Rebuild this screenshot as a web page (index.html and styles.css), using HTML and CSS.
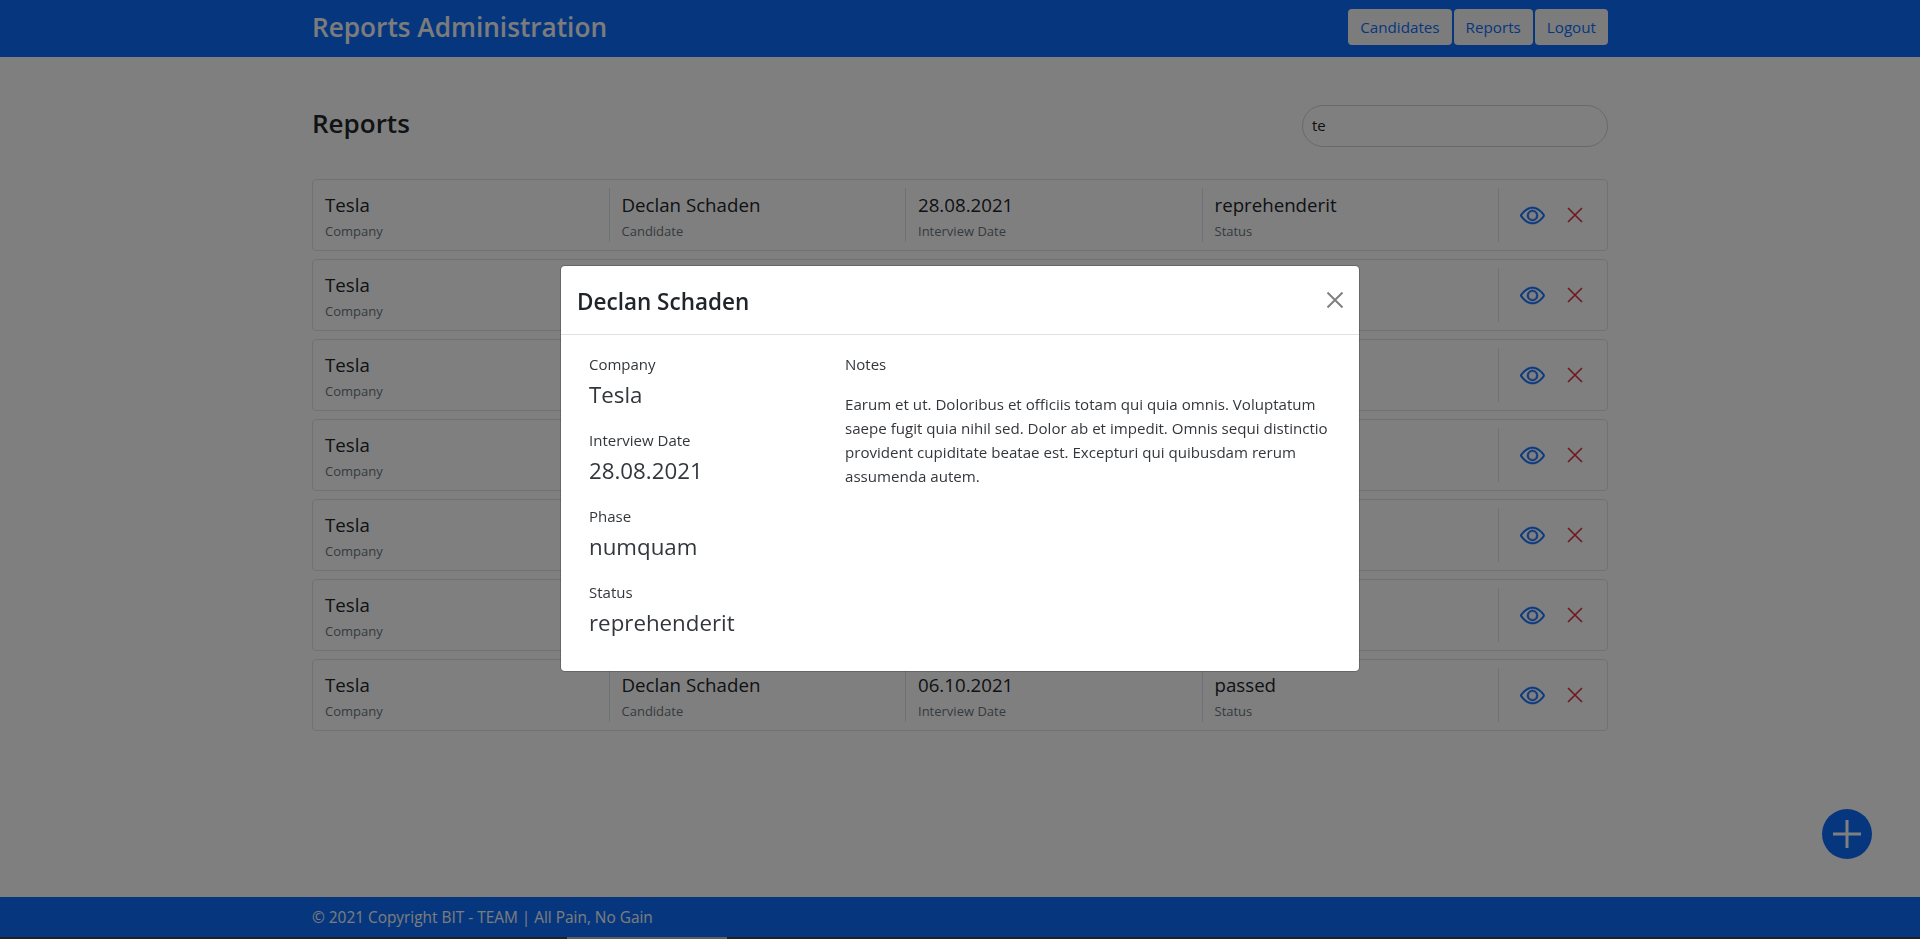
FILE: index.html
```html
<!DOCTYPE html>
<html lang="en">

<head>
    <meta charset="UTF-8">
    <meta name="viewport" content="width=device-width, initial-scale=1.0">
    <title>Reports Administration</title>
    <link rel="stylesheet" href="styles.css">
</head>

<body>
    <nav class="navbar">
        <div class="container navbar-inner">
            <span class="brand">Reports Administration</span>
            <div class="nav-buttons">
                <a class="nav-btn" href="#">Candidates</a>
                <a class="nav-btn" href="#">Reports</a>
                <a class="nav-btn" href="#">Logout</a>
            </div>
        </div>
    </nav>

    <main class="container content">
        <div class="page-head">
            <h2>Reports</h2>
            <input class="search" type="text" value="te">
        </div>

        <div class="report">
            <div class="cell"><div class="value">Tesla</div><div class="label">Company</div></div>
            <div class="cell"><div class="value">Declan Schaden</div><div class="label">Candidate</div></div>
            <div class="cell"><div class="value">28.08.2021</div><div class="label">Interview Date</div></div>
            <div class="cell"><div class="value">reprehenderit</div><div class="label">Status</div></div>
            <div class="actions">
                <svg class="eye" viewBox="0 0 16 16"><use href="#icon-eye"></use></svg>
                <svg class="cross" viewBox="0 0 16 16"><use href="#icon-x"></use></svg>
            </div>
        </div>
        <!-- the modal covers the middle of these rows -->
        <div class="report">
            <div class="cell"><div class="value">Tesla</div><div class="label">Company</div></div>
            <div class="cell"></div>
            <div class="cell"></div>
            <div class="cell"></div>
            <div class="actions">
                <svg class="eye" viewBox="0 0 16 16"><use href="#icon-eye"></use></svg>
                <svg class="cross" viewBox="0 0 16 16"><use href="#icon-x"></use></svg>
            </div>
        </div>
        <div class="report">
            <div class="cell"><div class="value">Tesla</div><div class="label">Company</div></div>
            <div class="cell"></div>
            <div class="cell"></div>
            <div class="cell"></div>
            <div class="actions">
                <svg class="eye" viewBox="0 0 16 16"><use href="#icon-eye"></use></svg>
                <svg class="cross" viewBox="0 0 16 16"><use href="#icon-x"></use></svg>
            </div>
        </div>
        <div class="report">
            <div class="cell"><div class="value">Tesla</div><div class="label">Company</div></div>
            <div class="cell"></div>
            <div class="cell"></div>
            <div class="cell"></div>
            <div class="actions">
                <svg class="eye" viewBox="0 0 16 16"><use href="#icon-eye"></use></svg>
                <svg class="cross" viewBox="0 0 16 16"><use href="#icon-x"></use></svg>
            </div>
        </div>
        <div class="report">
            <div class="cell"><div class="value">Tesla</div><div class="label">Company</div></div>
            <div class="cell"></div>
            <div class="cell"></div>
            <div class="cell"></div>
            <div class="actions">
                <svg class="eye" viewBox="0 0 16 16"><use href="#icon-eye"></use></svg>
                <svg class="cross" viewBox="0 0 16 16"><use href="#icon-x"></use></svg>
            </div>
        </div>
        <div class="report">
            <div class="cell"><div class="value">Tesla</div><div class="label">Company</div></div>
            <div class="cell"></div>
            <div class="cell"></div>
            <div class="cell"></div>
            <div class="actions">
                <svg class="eye" viewBox="0 0 16 16"><use href="#icon-eye"></use></svg>
                <svg class="cross" viewBox="0 0 16 16"><use href="#icon-x"></use></svg>
            </div>
        </div>
        <div class="report">
            <div class="cell"><div class="value">Tesla</div><div class="label">Company</div></div>
            <div class="cell"><div class="value">Declan Schaden</div><div class="label">Candidate</div></div>
            <div class="cell"><div class="value">06.10.2021</div><div class="label">Interview Date</div></div>
            <div class="cell"><div class="value">passed</div><div class="label">Status</div></div>
            <div class="actions">
                <svg class="eye" viewBox="0 0 16 16"><use href="#icon-eye"></use></svg>
                <svg class="cross" viewBox="0 0 16 16"><use href="#icon-x"></use></svg>
            </div>
        </div>
    </main>

    <footer class="footer">
        <div class="container">&copy; 2021 Copyright BIT - TEAM | All Pain, No Gain</div>
    </footer>
    <div class="bottom-strip"><span class="strip-tab"></span></div>

    <button class="add-btn">
        <svg viewBox="0 0 28 28"><path d="M14 0v28M0 14h28"></path></svg>
    </button>

    <div class="backdrop"></div>

    <div class="modal">
        <div class="modal-header">
            <h5>Declan Schaden</h5>
            <svg class="modal-close" viewBox="0 0 16 16"><path d="M.5.5l15 15M15.500.5l-15 15"></path></svg>
        </div>
        <div class="modal-body">
            <div class="details">
                <div class="detail"><div class="detail-label">Company</div><div class="detail-value">Tesla</div></div>
                <div class="detail"><div class="detail-label">Interview Date</div><div class="detail-value">28.08.2021</div></div>
                <div class="detail"><div class="detail-label">Phase</div><div class="detail-value">numquam</div></div>
                <div class="detail"><div class="detail-label">Status</div><div class="detail-value">reprehenderit</div></div>
            </div>
            <div class="notes">
                <div class="detail-label">Notes</div>
                <p>Earum et ut. Doloribus et officiis totam qui quia omnis. Voluptatum saepe fugit quia nihil sed. Dolor ab et impedit. Omnis sequi distinctio provident cupiditate beatae est. Excepturi qui quibusdam rerum assumenda autem.</p>
            </div>
        </div>
    </div>

    <svg class="icon-defs">
        <symbol id="icon-eye" viewBox="0 0 16 16">
            <path d="M16 8s-3-5.500-8-5.500S0 8 0 8s3 5.500 8 5.500S16 8 16 8zM1.173 8a13.133 13.133 0 0 1 1.660-2.043C4.120 4.668 5.880 3.500 8 3.500c2.120 0 3.879 1.168 5.168 2.457A13.133 13.133 0 0 1 14.828 8c-.058.087-.122.183-.195.288-.335.480-.830 1.120-1.465 1.755C11.879 11.332 10.119 12.500 8 12.500c-2.120 0-3.879-1.168-5.168-2.457A13.134 13.134 0 0 1 1.172 8z"></path>
            <path d="M8 5.500a2.500 2.500 0 1 0 0 5 2.500 2.500 0 0 0 0-5zM4.500 8a3.500 3.500 0 1 1 7 0 3.500 3.500 0 0 1-7 0z"></path>
        </symbol>
        <symbol id="icon-x" viewBox="0 0 16 16">
            <path d="M1 1l14 14M15 1L1 15" fill="none" stroke="currentColor" stroke-width="1.700"></path>
        </symbol>
    </svg>
</body>

</html>
```

FILE: styles.css
```css
* {
    box-sizing: border-box;
}

body {
    margin: 0;
    min-height: 939px;
    display: flex;
    flex-direction: column;
    font-family: 'Open Sans', 'Noto Sans', sans-serif;
    font-size: 15px;
    line-height: 24px;
    color: #212529;
    background-color: #fff;
}

.container {
    width: 1320px;
    margin: 0 auto;
    padding: 0 12px;
}

.navbar {
    height: 57px;
    background-color: #0d6efd;
}

.navbar-inner {
    height: 100%;
    display: flex;
    align-items: center;
    justify-content: space-between;
}

.brand {
    margin-bottom: 4px;
    font-size: 26.200px;
    font-weight: 600;
    color: #f8f9fa;
}

.nav-buttons {
    display: flex;
    gap: 2px;
    margin-bottom: 3px;
}

.nav-btn {
    height: 36px;
    padding: 0 12px;
    display: flex;
    align-items: center;
    font-size: 15.200px;
    color: #0d6efd;
    background-color: #f8f9fa;
    border-radius: 4px;
    text-decoration: none;
}

.content {
    flex: 1;
    padding-top: 48px;
}

.page-head {
    height: 42px;
    margin-bottom: 32px;
    display: flex;
    align-items: center;
    justify-content: space-between;
}

h2 {
    margin: 0 0 7px;
    font-size: 26px;
    font-weight: 600;
    line-height: 38px;
}

.search {
    width: 306px;
    height: 42px;
    padding: 0 9px 2px;
    font-family: inherit;
    font-size: 15px;
    color: #212529;
    border: 1px solid #ced4da;
    border-radius: 21px;
    outline: none;
}

.report {
    height: 72px;
    margin-bottom: 8px;
    padding: 8px 0;
    display: flex;
    border: 1px solid #dee2e6;
    border-radius: 4px;
}

.cell {
    width: 296.500px;
    padding: 2px 12px 0;
    border-right: 1px solid #dee2e6;
}

.value {
    font-size: 18.700px;
    line-height: 30px;
}

.label {
    font-size: 13px;
    line-height: 22px;
    color: #6c757d;
}

.actions {
    flex: 1;
    padding-left: 21px;
    display: flex;
    align-items: center;
    gap: 22px;
}

.eye {
    width: 25px;
    height: 25px;
    fill: #0d6efd;
    stroke: #0d6efd;
    stroke-width: 0.3;
}

.cross {
    width: 16px;
    height: 16px;
    color: #dc3545;
}

.footer {
    height: 40px;
    padding-top: 1px;
    display: flex;
    align-items: center;
    font-size: 15.400px;
    color: #f8f9fa;
    background-color: #0d6efd;
}

.bottom-strip {
    height: 2px;
    padding-left: 567px;
    background-color: #3c4043;
}

.strip-tab {
    display: block;
    width: 160px;
    height: 2px;
    background-color: #b8b8b8;
}

.add-btn {
    position: fixed;
    left: 1822px;
    top: 809px;
    width: 50px;
    height: 50px;
    padding: 11px;
    border: none;
    border-radius: 50%;
    background-color: #0d6efd;
}

.add-btn svg {
    display: block;
    stroke: #fff;
    stroke-width: 3;
}

.backdrop {
    position: fixed;
    top: 0;
    left: 0;
    width: 100%;
    height: 100%;
    background-color: rgba(0, 0, 0, 0.5);
}

.modal {
    position: fixed;
    top: 265px;
    left: 560px;
    width: 800px;
    height: 407px;
    background-color: #fff;
    border: 1px solid rgba(0, 0, 0, 0.2);
    border-radius: 4.800px;
    background-clip: padding-box;
}

.modal-header {
    height: 69px;
    padding: 0 16px;
    display: flex;
    align-items: center;
    justify-content: space-between;
    border-bottom: 1px solid #dee2e6;
}

h5 {
    margin: 3px 0 0;
    font-size: 22.500px;
    font-weight: 600;
    line-height: 30px;
}

.modal-close {
    width: 16px;
    height: 16px;
    stroke: #808080;
    stroke-width: 2;
}

.modal-body {
    padding: 17px 28px;
    display: grid;
    grid-template-columns: 256px 1fr;
    color: #33373b;
}

.detail {
    height: 76px;
}

.detail-label {
    line-height: 24px;
    font-size: 15px;
}

.detail-value {
    font-size: 22.300px;
    line-height: 38px;
}

.notes p {
    margin: 16px 0 0;
    font-size: 15.100px;
    line-height: 24px;
}

.icon-defs {
    display: none;
}
```
